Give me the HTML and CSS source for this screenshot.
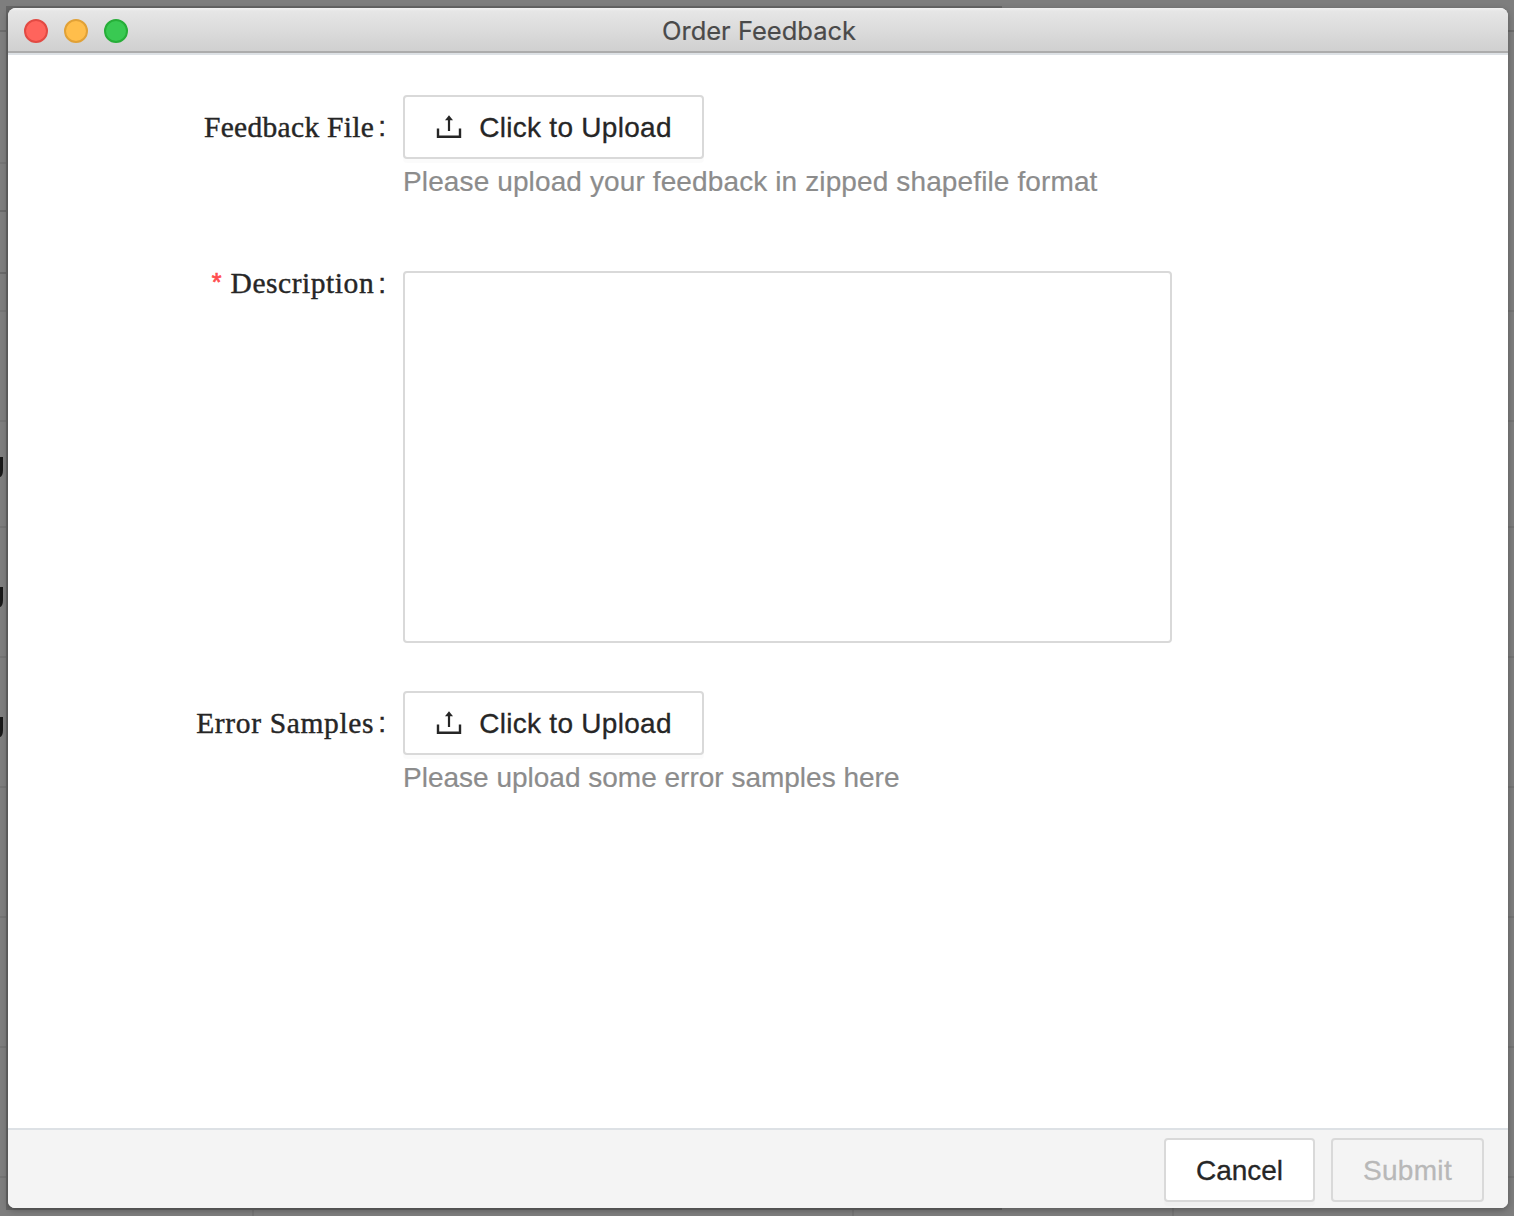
FILE: index.html
```html
<!DOCTYPE html>
<html lang="en">
<head>
<meta charset="utf-8">
<title>Order Feedback</title>
<link rel="stylesheet" href="styles.css">
</head>
<body>
<div class="backdrop" aria-hidden="true"><i class="stub"></i><i class="stub"></i><i class="stub"></i></div>
<main class="window">
  <header class="titlebar">
    <div class="lights"><span class="light red"></span><span class="light yellow"></span><span class="light green"></span></div>
    <h1 class="title"><span>Order Feedback</span></h1>
  </header>
  <form class="form">
    <div class="row upload-row">
      <div class="label"><span class="name file">Feedback File</span><span class="colon">:</span></div>
      <div class="control">
        <button type="button" class="btn upload"><svg class="icon" viewBox="0 0 28 28"><path d="M3 15.5v8.3h22v-8.3" fill="none" stroke="currentColor" stroke-width="2.4"/><path d="M14 18V6" stroke="currentColor" stroke-width="2.2"/><path d="M14 2.2l4 5h-8z" fill="currentColor"/></svg><span class="caption">Click to Upload</span></button>
        <p class="hint file-hint">Please upload your feedback in zipped shapefile format</p>
      </div>
    </div>
    <div class="row desc-row">
      <div class="label"><span class="required">*</span><span class="name desc">Description</span><span class="colon">:</span></div>
      <div class="control"><textarea class="textarea" aria-label="Description"></textarea></div>
    </div>
    <div class="row upload-row">
      <div class="label"><span class="name samples">Error Samples</span><span class="colon">:</span></div>
      <div class="control">
        <button type="button" class="btn upload"><svg class="icon" viewBox="0 0 28 28"><path d="M3 15.5v8.3h22v-8.3" fill="none" stroke="currentColor" stroke-width="2.4"/><path d="M14 18V6" stroke="currentColor" stroke-width="2.2"/><path d="M14 2.2l4 5h-8z" fill="currentColor"/></svg><span class="caption">Click to Upload</span></button>
        <p class="hint">Please upload some error samples here</p>
      </div>
    </div>
  </form>
  <footer class="footer">
    <button type="button" class="btn cancel"><span class="caption">Cancel</span></button>
    <button type="button" class="btn submit" disabled><span class="caption">Submit</span></button>
  </footer>
</main>
</body>
</html>
```
FILE: styles.css
```css
* { box-sizing: border-box; }
body {
  margin: 0;
  width: 1514px;
  height: 1216px;
  padding: 8px 6px 8px 8px;
  overflow: hidden;
  background: #7c7c7c;
  font-family: "Liberation Sans", Arial, sans-serif;
  font-size: 28px;
  color: #262626;
}
/* dimmed table page behind the dialog */
.backdrop {
  position: absolute;
  inset: 0;
  padding-top: 457px;
  display: flex;
  flex-direction: column;
  gap: 110px;
  background:
    linear-gradient(#666, #666) 6px 6px / 996px 1204px no-repeat,
    linear-gradient(#6c6c6c, #6c6c6c) 0 30px / 100% 2px no-repeat,
    linear-gradient(#6a6a6a, #6a6a6a) 0 210px / 8px 2px no-repeat,
    linear-gradient(#6a6a6a, #6a6a6a) 0 272px / 8px 2px no-repeat,
    linear-gradient(#757575, #757575) 0 162px / 8px 2px no-repeat,
    linear-gradient(#757575, #757575) 0 310px / 100% 2px no-repeat,
    linear-gradient(#757575, #757575) 0 420px / 100% 2px no-repeat,
    linear-gradient(#757575, #757575) 252px 100% / 2px 8px no-repeat,
    linear-gradient(#757575, #757575) 852px 100% / 2px 8px no-repeat,
    linear-gradient(#757575, #757575) 1172px 100% / 2px 8px no-repeat,
    repeating-linear-gradient(transparent 0 126px, #747474 126px 128px, transparent 128px 130px) 0 400px / 100% 780px no-repeat,
    #7e7e7e;
}
.stub {
  width: 3px;
  height: 20px;
  background: #181818;
  border-bottom-right-radius: 3px 7px;
}
.window {
  position: relative;
  width: 1500px;
  height: 1200px;
  display: flex;
  flex-direction: column;
  background: #fff;
  border-radius: 8px 8px 7px 7px;
  box-shadow: 0 2px 6px 0 rgba(0, 0, 0, .3);
  overflow: hidden;
}
.titlebar {
  height: 47px;
  display: grid;
  grid-template-columns: 200px 1fr 200px;
  border-bottom: 2px solid #dde1e5;
  background: linear-gradient(#f3f3f3 0, #e6e6e6 3px, #d0d0d0 43px, #acacac 43px);
}
.lights { display: flex; gap: 16px; padding: 11px 0 0 16px; }
.light { width: 24px; height: 24px; border-radius: 50%; border: 2px solid; }
.red { background: #ff645c; border-color: #e24a43; }
.yellow { background: #ffbe4b; border-color: #e1a136; }
.green { background: #39c952; border-color: #26ae38; }
.title {
  margin: 0;
  padding-left: 2px;
  text-align: center;
  font: 400 25.5px/45px Inter, sans-serif;
  color: #4a4a4a;
  -webkit-text-stroke: .2px currentColor;
}
.form { flex: 1; padding-top: 40px; }
.row { display: grid; grid-template-columns: 379px 1fr; column-gap: 16px; }
.upload-row { height: 176px; }
.desc-row { height: 420px; }
.label {
  display: flex;
  justify-content: flex-end;
  font-family: "Liberation Serif", serif;
  font-size: 29.5px;
  line-height: 64px;
  white-space: nowrap;
}
.name { -webkit-text-stroke: .4px currentColor; }
.file { letter-spacing: .3px; }
.desc { letter-spacing: .55px; }
.samples { letter-spacing: .65px; }
.desc-row .label { line-height: 25px; }
.colon {
  margin: 0 1px 0 4px;
  font-family: "Liberation Sans", sans-serif;
  font-size: 28px;
  -webkit-text-stroke: .4px currentColor;
}
.required {
  margin-right: 9px;
  color: #ff4d4f;
  font-family: "Liberation Sans", sans-serif;
  font-size: 25px;
  line-height: 22px;
  -webkit-text-stroke: .7px currentColor;
}
.btn {
  display: flex;
  align-items: center;
  justify-content: center;
  height: 64px;
  padding: 0;
  border: 2px solid #d9d9d9;
  border-radius: 4px;
  background: #fff;
  box-shadow: 0 4px 0 rgba(0, 0, 0, .016);
  font: 28px "Liberation Sans", Arial, sans-serif;
  color: #262626;
}
.caption { padding-top: 2px; -webkit-text-stroke: .3px currentColor; }
.upload { width: 301px; gap: 16px; letter-spacing: .28px; }
.icon { width: 28px; height: 28px; }
.hint {
  margin: 6px 0 0;
  line-height: 34px;
  color: #8c8c8c;
  white-space: nowrap;
  -webkit-text-stroke: .2px currentColor;
}
.file-hint { letter-spacing: .12px; }
.textarea {
  display: block;
  width: 769px;
  height: 372px;
  border: 2px solid #d9d9d9;
  border-radius: 4px;
  background: #fff;
  resize: none;
}
.footer {
  height: 80px;
  display: flex;
  justify-content: flex-end;
  gap: 16px;
  padding: 8px 24px 0 0;
  border-top: 2px solid #dde1e5;
  background: #f4f4f4;
}
.cancel { width: 151px; }
.submit { width: 153px; background: #f4f4f4; color: #b8b8b8; box-shadow: none; letter-spacing: .3px; }
```
